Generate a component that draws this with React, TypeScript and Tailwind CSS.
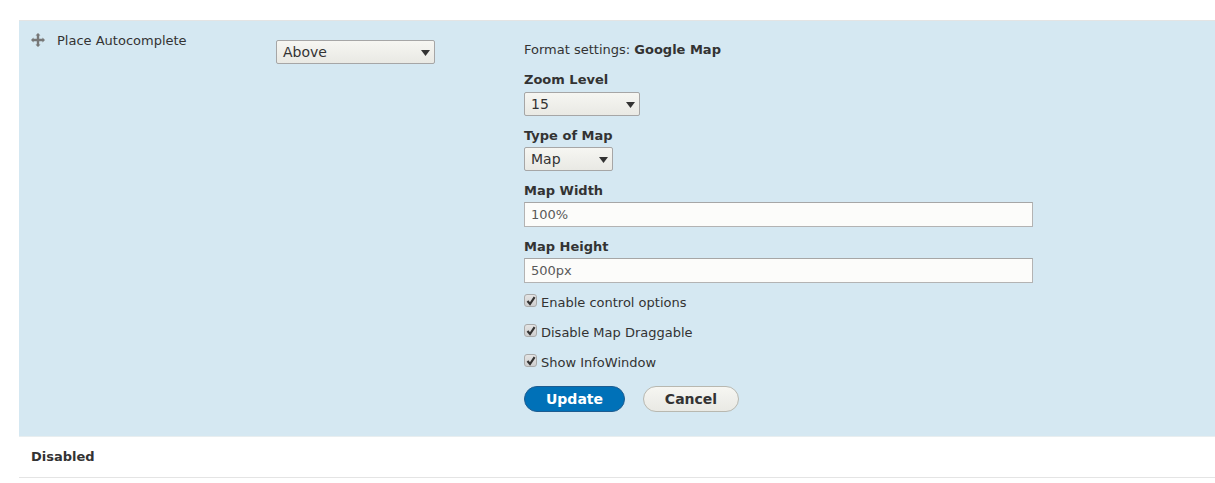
import { ReactNode } from 'react'

const font = "font-['DejaVu_Sans',sans-serif]"

function Select({ value, width }: { value: string; width: string }) {
  return (
    <div className={`relative h-6 ${width} rounded-[2px] border border-[#a6a6a6] bg-gradient-to-b from-[#f6f6f2] to-[#e9e9e4] pl-[6px] text-[14px] leading-[22px] text-[#333]`}>
      {value}
      <svg className="absolute right-[4px] top-[9px]" width="9" height="6" viewBox="0 0 9 6">
        <path d="M0 0h9L4.5 6z" fill="#333" />
      </svg>
    </div>
  )
}

function Field({ label, first, children }: { label: string; first?: boolean; children: ReactNode }) {
  return (
    <div>
      <div className="h-[18px] text-[13px] font-bold leading-[18px] text-[#333]">{label}</div>
      <div className={first ? 'mt-[3px]' : 'mt-[2px]'}>{children}</div>
    </div>
  )
}

function TextInput({ value }: { value: string }) {
  return (
    <input
      readOnly
      value={value}
      className="block h-[25px] w-[509px] border border-[#b3b3b3] border-t-[#a6a6a6] bg-[#fcfcfa] px-[6px] text-[13px] text-[#595959] outline-none"
    />
  )
}

function Check({ label }: { label: string }) {
  return (
    <div className="flex h-[18px] items-center gap-[4px] text-[13px] text-[#333]">
      <span className="flex h-[13px] w-[13px] self-start items-center justify-center rounded-[3px] border border-[#aaa] bg-gradient-to-b from-[#e4e4e4] to-[#cfcfcf]">
        <svg width="10" height="10" viewBox="0 0 10 10">
          <path d="M1.5 5 4 8l4.6-6.8" fill="none" stroke="#333" strokeWidth="2.2" />
        </svg>
      </span>
      {label}
    </div>
  )
}

export default function App() {
  return (
    <div className={`h-[483px] overflow-hidden bg-white pt-5 ${font}`}>
      <div className="ml-[19px]">
        {/* Active row */}
        <div className="flex h-[417px] border-y border-t-[#e4e4e4] border-b-[#e8eef0] bg-[#d5e8f2]">
          <div className="flex w-[257px] shrink-0 items-start gap-[12px] pl-[12px] pt-[11px]">
            <svg className="mt-[1px]" width="14" height="14" viewBox="0 0 14 14">
              <path
                d="M7 0 9.500 2.500H8.200v3.300h3.300V4.500L14 7l-2.500 2.500V8.200H8.200v3.300h1.300L7 14l-2.500-2.500h1.300V8.200H2.500v1.300L0 7l2.500-2.500v1.300h3.300V2.500H4.500z"
                fill="#777"
              />
            </svg>
            <span className="text-[13px] leading-[18px] text-[#333]">Place Autocomplete</span>
          </div>
          <div className="w-[248px] shrink-0 pt-[19px]">
            <Select value="Above" width="w-[159px]" />
          </div>
          <div className="flex flex-col pt-[20px]">
            <div className="h-[18px] text-[13px] leading-[18px] text-[#333]">
              Format settings: <span className="font-bold">Google Map</span>
            </div>
            <div className="mt-[12px] flex flex-col gap-[11px]">
              <Field label="Zoom Level" first>
                <Select value="15" width="w-[116px]" />
              </Field>
              <Field label="Type of Map">
                <Select value="Map" width="w-[89px]" />
              </Field>
              <Field label="Map Width">
                <TextInput value="100%" />
              </Field>
              <Field label="Map Height">
                <TextInput value="500px" />
              </Field>
            </div>
            <div className="mt-[11px] flex flex-col gap-3">
              <Check label="Enable control options" />
              <Check label="Disable Map Draggable" />
              <Check label="Show InfoWindow" />
            </div>
            <div className="mt-[14px] flex gap-[18px]">
              <button className="h-[26px] w-[101px] rounded-[20px] border border-[#1e5c90] bg-[#0071b8] text-[14px] font-bold text-white">
                Update
              </button>
              <button className="h-[26px] w-[96px] rounded-[20px] border border-[#b8b8b0] bg-gradient-to-b from-[#f6f6f2] to-[#e9e9e4] text-[14px] font-bold text-[#333]">
                Cancel
              </button>
            </div>
          </div>
        </div>
        {/* Disabled region */}
        <div className="flex h-[41px] items-center border-b border-[#e4e4e4] pl-3 text-[13px] font-bold text-[#333]">
          Disabled
        </div>
      </div>
    </div>
  )
}
